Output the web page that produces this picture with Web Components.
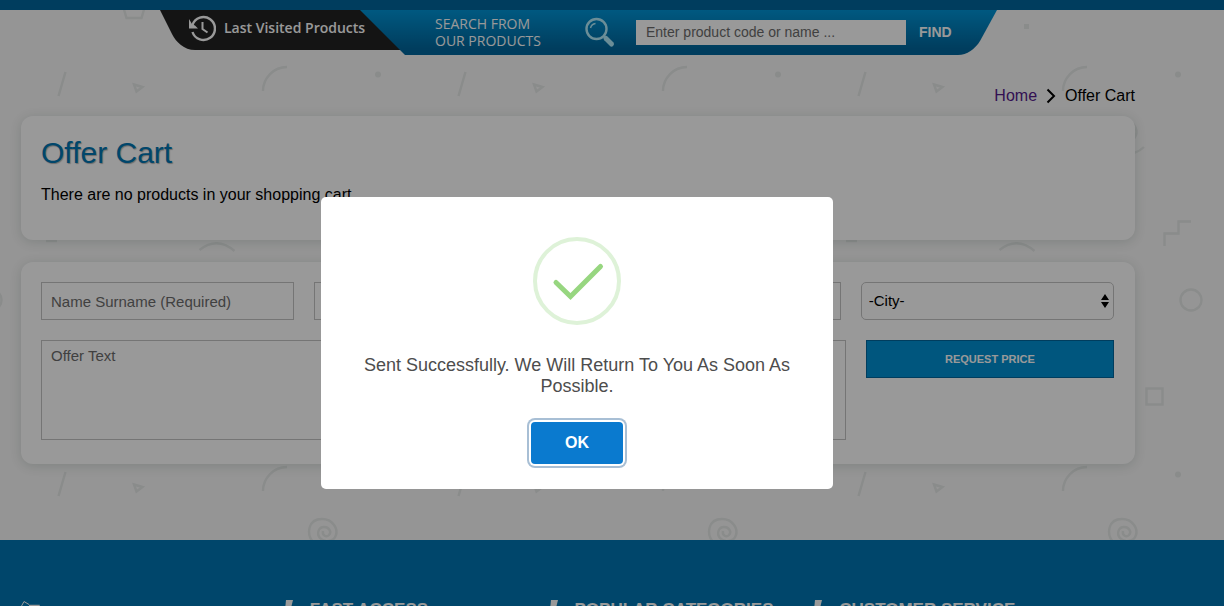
<!DOCTYPE html>
<html lang="en">
<head>
<meta charset="utf-8">
<title>Offer Cart</title>
<style>
html, body { height: 100%; margin: 0; overflow: hidden; }
body { font: 16px/20px "Liberation Sans", Arial, sans-serif; color: #000; background: #f8f8f8; }
</style>
</head>
<body>
<offer-page></offer-page>

<script>
const define = (name, html) => {
  const template = document.createElement('template');
  template.innerHTML = html;
  customElements.define(name, class extends HTMLElement {
    constructor() {
      super();
      this.attachShadow({ mode: 'open' }).append(template.content.cloneNode(true));
    }
  });
};

define('doodle-backdrop', `
<style>
:host { display: block; position: absolute; inset: 0; z-index: -1; }
svg { display: block; width: 100%; height: 100%; }
</style>
<svg aria-hidden="true">
  <defs>
    <pattern id="doodles" width="400" height="400" patternUnits="userSpaceOnUse">
      <g fill="none" stroke="#e6e9e8" stroke-width="2.400">
        <path d="M58.500 96L65.500 72"/>
        <path d="M134 84.500L142.500 87L136.500 91.500Z"/>
        <path d="M263 91A24 24 0 0 1 287 67"/>
        <path d="M123 6L126.500 18H141.500L145 6"/>
        <path d="M313 142C306 134 308 119 322 119C333 119 338 129 336 135C334 142 324 143 320 138C316 133 319 127 324 127C329 127 332 132 329 135C326 138 322 135 323 131"/>
        <path d="M334 153Q340 151 344 147"/>
        <path d="M364.500 246V233.500H378.500V221.500H391"/>
        <circle cx="391" cy="300" r="10.500"/>
        <circle cx="-9" cy="300" r="10.500"/>
        <rect x="346.500" y="388.500" width="16" height="16"/>
        <rect x="346.500" y="-11.500" width="16" height="16"/>
        <path d="M199.500 250Q217 236 234.500 251"/>
        <path d="M46 241H57"/>
      </g>
      <g fill="#e6e9e8"><circle cx="378" cy="74.500" r="3"/><rect x="224" y="24" width="5" height="5"/></g>
    </pattern>
  </defs>
  <rect width="100%" height="100%" fill="url(#doodles)"/>
</svg>`);

define('recent-link', `
<style>
:host { display: flex; }
a { display: flex; align-items: center; gap: 8px; color: #fff; text-decoration: none; font: 600 14px/20px "Open Sans", sans-serif; white-space: nowrap; }
svg { flex: none; }
</style>
<a href="#recent">
  <svg width="28" height="28" viewBox="0 0 28 28" aria-hidden="true">
    <path d="M4.500 11A11.500 11.500 0 1 1 4.500 18" fill="none" stroke="#fff" stroke-width="2.400"/>
    <path d="M1 5V14.500H10L7 11.500L4 10Z" fill="#fff"/>
    <path d="M14.500 8V15L19.500 18.500" fill="none" stroke="#fff" stroke-width="2"/>
  </svg>
  <slot></slot>
</a>`);

define('product-search', `
<style>
:host { display: flex; }
form { display: flex; align-items: center; width: 100%; }
label { font: 500 14px/17px "Open Sans", sans-serif; color: #fff; white-space: nowrap; width: 150px; padding-bottom: 2px; }
svg { flex: none; margin-right: 20px; }
input { box-sizing: border-box; width: 270px; height: 25px; border: 0; padding: 0 10px 2px; background: #fff; font: 14px "Liberation Sans", Arial, sans-serif; border-radius: 0; }
input::placeholder { color: #6c6c6c; opacity: 1; }
button { border: 0; padding: 0 13px 2px; background: none; color: #fff; font: bold 14px/20px "Liberation Sans", Arial, sans-serif; }
</style>
<form>
  <label for="q">SEARCH FROM<br>OUR PRODUCTS</label>
  <svg width="31" height="31" viewBox="0 0 31 31" fill="none" stroke="#b2ecfc" aria-hidden="true">
    <circle cx="11.500" cy="12" r="10" stroke-width="2.400"/>
    <path d="M5.500 11A6 6 0 0 1 10.500 6.500" stroke-width="1.400"/>
    <path d="M18.500 19L21 21.500" stroke-width="2"/>
    <path d="M21 21.500L26.500 27" stroke-width="5" stroke-linecap="round"/>
  </svg>
  <input id="q" type="text" placeholder="Enter product code or name ...">
  <button type="button">FIND</button>
</form>`);

define('site-header', `
<style>
:host { display: block; border-top: 10px solid #00679d; padding-right: 67px; }
.ribbon { position: relative; display: flex; width: 837px; height: 45px; margin: 0 auto; }
.shape { position: absolute; inset: 0; z-index: -1; }
recent-link { box-sizing: border-box; width: 275px; height: 40px; padding-left: 28px; padding-bottom: 4px; }
product-search { flex: 1; }
</style>
<header class="ribbon">
  <svg class="shape" width="837" height="45" viewBox="0 0 837 45" aria-hidden="true">
    <defs><linearGradient id="blue" x2="0" y2="1"><stop offset="0" stop-color="#0094d6"/><stop offset=".85" stop-color="#00679d"/></linearGradient></defs>
    <path d="M0 0H210L245 40H35C24 40 16 32 12 24Z" fill="#222"/>
    <path d="M200 0H837L820 31C815 39 807 45 798 45H245Z" fill="url(#blue)"/>
  </svg>
  <recent-link>Last Visited Products</recent-link>
  <product-search></product-search>
</header>`);

define('bread-crumb', `
<style>
:host { display: block; }
nav { display: flex; align-items: center; justify-content: flex-end; gap: 9px; }
a { color: #551a8b; text-decoration: none; }
</style>
<nav aria-label="Breadcrumb">
  <a href="#home">Home</a>
  <svg width="10" height="16" viewBox="0 0 10 16" fill="none" stroke="#000" stroke-width="2" aria-hidden="true"><path d="M1.500 1.500L8 8L1.500 14.500"/></svg>
  <span><slot></slot></span>
</nav>`);

define('content-card', `
<style>
:host { display: block; box-sizing: border-box; padding: 20px 21px 24px 20px; border-radius: 12px; background: #fff; box-shadow: 0 2px 12px rgba(0, 40, 30, .14); }
</style>
<slot></slot>`);

define('cart-summary', `
<style>
:host { display: block; }
h1 { margin: 0 0 15px; font-size: 30px; line-height: 34px; font-weight: 400; color: #0076b2; text-shadow: 1px 1px 1px rgba(0, 0, 0, .3); }
p { margin: 0 0 11px; line-height: 20px; }
</style>
<h1>Offer Cart</h1>
<p>There are no products in your shopping cart.</p>`);

define('offer-form', `
<style>
:host { display: block; }
form { display: grid; gap: 20px; }
.fields { display: grid; grid-template-columns: repeat(4, 1fr); gap: 20px; }
.message { display: flex; align-items: flex-start; gap: 20px; }
input, textarea, select { box-sizing: border-box; margin: 0; border: 1px solid #c4c4c4; border-radius: 0; background: #fff; color: #000; font: 15px/18px "Liberation Sans", Arial, sans-serif; }
input, select { width: 100%; height: 38px; padding: 0 9px; }
::placeholder { color: #6c6c6c; opacity: 1; }
textarea { display: block; width: 75%; height: 100px; padding: 6px 9px; resize: none; }
.pick { display: grid; align-items: center; }
.pick > * { grid-area: 1 / 1; }
.pick svg { justify-self: end; margin-right: 5px; pointer-events: none; }
select { appearance: none; padding: 0 7px; border-radius: 5px; }
button { flex: 1; height: 38px; border: 1px solid #00679d; background: #008fd2; color: #fff; font: bold 11px "Liberation Sans", Arial, sans-serif; }
</style>
<form>
  <div class="fields">
    <input type="text" aria-label="Name Surname" placeholder="Name Surname (Required)">
    <input type="tel" aria-label="Phone">
    <input type="email" aria-label="Email">
    <div class="pick">
      <select aria-label="City"><option>-City-</option></select>
      <svg width="8" height="14" viewBox="0 0 8 14" aria-hidden="true"><path d="M4 0L8 6H0ZM4 14L8 8H0Z"/></svg>
    </div>
  </div>
  <div class="message">
    <textarea aria-label="Offer Text" placeholder="Offer Text"></textarea>
    <button type="button">REQUEST PRICE</button>
  </div>
</form>`);

define('footer-column', `
<style>
:host { display: block; }
h2 { display: flex; gap: 17px; margin: 0; font-size: 17px; line-height: 20px; font-weight: 700; white-space: nowrap; }
h2 svg { flex: none; }
</style>
<h2><svg width="9" height="20" viewBox="0 0 9 20" fill="#fff" aria-hidden="true"><path d="M2 0H9L4 20H0Z"/></svg><slot></slot></h2>`);

define('site-footer', `
<style>
:host { display: block; background: #0076b2; color: #fff; }
footer { display: grid; grid-template-columns: repeat(4, 1fr); padding: 60px 146px 60px 19px; }
</style>
<footer>
  <svg width="24" height="24" viewBox="0 0 24 24" fill="none" stroke="#fff" aria-hidden="true"><path d="M2 7L5 1.500L10 4.500"/><path d="M10 5.500H20V18H4L2 7" stroke-width="1.500"/></svg>
  <footer-column>FAST ACCESS</footer-column>
  <footer-column>POPULAR CATEGORIES</footer-column>
  <footer-column>CUSTOMER SERVICE</footer-column>
</footer>`);

define('success-dialog', `
<style>
:host { position: fixed; inset: 0; z-index: 10; box-sizing: border-box; display: grid; place-items: center; padding: 80px 70px 0 0; background: rgba(0, 0, 0, .4); }
section { box-sizing: border-box; width: 512px; max-width: 100%; padding: 40px 20px 25px; border-radius: 5px; background: #fff; text-align: center; }
svg { display: block; margin: 0 auto 30px; }
p { margin: 0 auto; padding: 0 20px; font-size: 18px; line-height: 21px; color: #4d4d4d; }
button { display: block; min-width: 92px; height: 42px; margin: 25px auto 0; border: 0; border-radius: 4px; background: #0a7acf; color: #fff; font: bold 16px "Liberation Sans", Arial, sans-serif; outline: none; box-shadow: 0 0 0 2px #fff, 0 0 0 4px #a8bfd5; }
</style>
<section role="alertdialog" aria-modal="true" aria-labelledby="note">
  <svg width="88" height="88" viewBox="0 0 88 88" fill="none" aria-hidden="true">
    <circle cx="44" cy="44" r="42" stroke="#def2d8" stroke-width="4"/>
    <path d="M23 45.500L37.500 59.500L67.500 29.500" stroke="#97d680" stroke-width="5" stroke-linecap="round"/>
  </svg>
  <p id="note"><slot></slot></p>
  <button type="button">OK</button>
</section>`);

define('offer-page', `
<style>
:host { display: block; position: relative; isolation: isolate; min-height: 100%; }
main { padding: 31px 89px 76px 21px; }
content-card { margin-bottom: 22px; }
content-card:last-child { margin-bottom: 0; }
bread-crumb { margin-bottom: 10px; }
</style>
<doodle-backdrop></doodle-backdrop>
<site-header></site-header>
<main>
  <bread-crumb>Offer Cart</bread-crumb>
  <content-card><cart-summary></cart-summary></content-card>
  <content-card><offer-form></offer-form></content-card>
</main>
<site-footer></site-footer>
<success-dialog>Sent Successfully. We Will Return To You As Soon As Possible.</success-dialog>`);
</script>
</body>
</html>
